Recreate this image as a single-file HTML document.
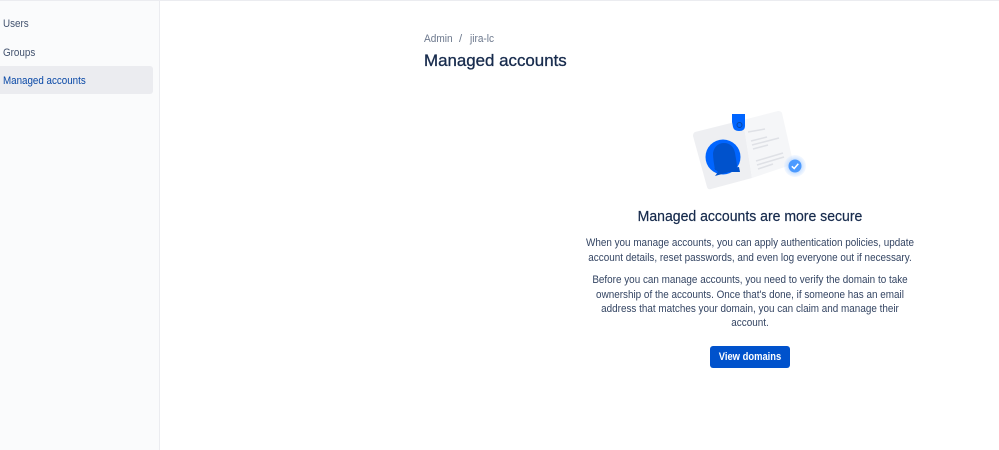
<!DOCTYPE html>
<html lang="en">
<head>
<meta charset="utf-8">
<title>Managed accounts</title>
<style>
html,body{margin:0;padding:0;width:999px;height:450px;overflow:hidden;background:#fff;font-family:"Liberation Sans",sans-serif;}
.abs{position:absolute;white-space:nowrap;}
.l{transform-origin:0 50%;}
.c{position:absolute;left:550px;width:400px;text-align:center;white-space:nowrap;font-size:11px;line-height:14px;color:#344563;transform:scaleX(.9);}
</style>
</head>
<body>
<div class="abs" style="left:0;top:0;width:999px;height:1px;background:#ebecf0;"></div>
<div class="abs" style="left:0;top:1px;width:159px;height:449px;background:#fafbfc;"></div>
<div class="abs" style="left:159px;top:1px;width:1px;height:449px;background:#ebecf0;"></div>
<div class="abs" style="left:0;top:66px;width:153px;height:28px;background:#ebecf0;border-radius:0 3px 3px 0;"></div>
<div class="abs l" style="left:3px;top:16px;font-size:11.2px;line-height:16px;color:#42526e;transform:scaleX(.88);">Users</div>
<div class="abs l" style="left:3px;top:45px;font-size:11.2px;line-height:16px;color:#42526e;transform:scaleX(.88);">Groups</div>
<div class="abs l" style="left:3px;top:73px;font-size:11.2px;line-height:16px;color:#0747a6;transform:scaleX(.875);">Managed accounts</div>

<div class="abs l" style="left:424px;top:32px;font-size:11.2px;line-height:14px;color:#6b778c;transform:scaleX(.9);">Admin</div>
<div class="abs" style="left:459px;top:32px;font-size:11.2px;line-height:14px;color:#6b778c;">/</div>
<div class="abs l" style="left:470px;top:32px;font-size:11.2px;line-height:14px;color:#6b778c;transform:scaleX(.9);">jira-lc</div>
<div class="abs" style="left:424px;top:50px;font-size:16.9px;line-height:22px;color:#172b4d;-webkit-text-stroke:.3px #172b4d;">Managed accounts</div>

<svg class="abs" style="left:0;top:0;filter:blur(.35px);" width="999" height="450" viewBox="0 0 999 450">
  <defs>
    <radialGradient id="h"><stop offset="0" stop-color="#4c9aff" stop-opacity=".75"/><stop offset=".6" stop-color="#b3d4ff" stop-opacity=".7"/><stop offset="1" stop-color="#deebff" stop-opacity=".35"/></radialGradient>
  </defs>
  <path d="M695 132L743 120L752 178L711 189Q708 190 707 187L693 136Q693 133 695 132Z" fill="#eeeff2"/>
  <path d="M743 120L778 111Q781 111 782 113L793 162Q793 164 791 165L752 178Z" fill="#f5f6f8"/>
  <circle cx="723" cy="157" r="17.5" fill="#0065ff"/>
  <path d="M715 170C714 164 713 158 713 153C714 147 718 143 724 143C730 143 734 147 735 153C736 159 737 164 737 167L729 170Z" fill="#0052cc"/>
  <path d="M714 168L722 170L730 168L739 167L740 172L729 172L715 176L718 172Z" fill="#0052cc"/>
  <path d="M732 114L745 114L745 126Q745 131 739 131Q734 131 733 127L732 122Z" fill="#0065ff"/>
  <circle cx="739.500" cy="125" r="2.500" fill="none" stroke="#0747a6" stroke-width="1"/>
  <g stroke="#dfe1e6" stroke-width="1.500" fill="none">
    <path d="M748 132L765 129"/>
    <path d="M751 141L767 137"/>
    <path d="M752 145L779 138"/>
    <path d="M753 149L768 145"/>
    <path d="M756 161L783 153"/>
    <path d="M757 165L784 157"/>
    <path d="M758 169L773 164"/>
  </g>
  <circle cx="795" cy="166" r="11" fill="url(#h)"/>
  <circle cx="795" cy="166" r="6.500" fill="#4c9aff"/>
  <path d="M791.800 166.300L794.200 168.500L798.300 163.800" stroke="#fff" stroke-width="1.500" fill="none"/>
</svg>

<div class="c" style="top:208px;font-size:14.4px;line-height:18px;color:#172b4d;-webkit-text-stroke:.2px #172b4d;transform:scaleX(.975);">Managed accounts are more secure</div>
<div class="c" style="top:236px;">When you manage accounts, you can apply authentication policies, update</div>
<div class="c" style="top:251px;">account details, reset passwords, and even log everyone out if necessary.</div>
<div class="c" style="top:273px;">Before you can manage accounts, you need to verify the domain to take</div>
<div class="c" style="top:288px;">ownership of the accounts. Once that's done, if someone has an email</div>
<div class="c" style="top:302px;">address that matches your domain, you can claim and manage their</div>
<div class="c" style="top:316px;">account.</div>
<div class="abs" style="left:710px;top:346px;width:80px;height:22px;background:#0052cc;border-radius:3px;"></div>
<div class="abs" style="left:710px;top:346px;width:80px;height:22px;line-height:23px;color:#fff;font-size:11.2px;font-weight:bold;text-align:center;transform:scaleX(.84);">View domains</div>
</body>
</html>
